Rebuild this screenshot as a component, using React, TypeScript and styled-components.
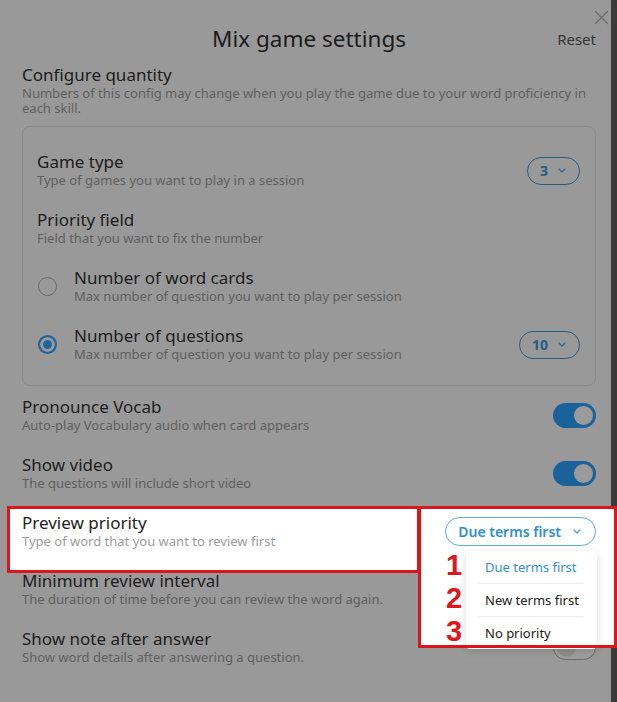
import React from "react";
import styled, { createGlobalStyle } from "styled-components";

const Global = createGlobalStyle`
  html, body { margin: 0; padding: 0; background: #999999; }
  body { font-family: "Noto Sans", "Liberation Sans", sans-serif; }
  * { box-sizing: border-box; }
`;

const Screen = styled.div`
  display: flex;
  width: 617px;
  height: 702px;
  background: #999999;
  overflow: hidden;
`;

const Modal = styled.div`
  position: relative;
  flex: 1;
  display: flex;
  flex-direction: column;
  padding: 26px 15px 0 22px;
`;

const Strip = styled.div`
  width: 6px;
  background: #3a3a3a;
`;

const Close = styled.button`
  position: absolute;
  top: 10px;
  right: 2px;
  width: 15px;
  height: 15px;
  padding: 0;
  border: 0;
  background: transparent;
  display: flex;
`;

const Header = styled.div`
  display: grid;
  grid-template-columns: 1fr auto 1fr;
  align-items: center;
`;

const Heading = styled.h1`
  grid-column: 2;
  margin: 0;
  font-size: 22.5px;
  line-height: 26px;
  font-weight: 400;
  color: #1c1c1c;
`;

const Reset = styled.span`
  justify-self: end;
  font-size: 15px;
  line-height: 20px;
  color: #353535;
`;

const Section = styled.div`
  margin-top: 13px;
`;

const Title = styled.div<{ $lit?: boolean }>`
  font-size: 17px;
  line-height: 20px;
  color: ${(p) => (p.$lit ? "#222222" : "#1c1c1c")};
`;

const Desc = styled.div<{ $lit?: boolean; $wrap?: boolean }>`
  font-size: 13px;
  line-height: ${(p) => (p.$wrap ? "15px" : "17px")};
  margin-top: ${(p) => (p.$wrap ? "1px" : "0")};
  color: ${(p) => (p.$lit ? "#9c9c9c" : "#5f5f5f")};
`;

const Box = styled.div`
  margin-top: 10px;
  border: 1px solid #8b8b8b;
  border-radius: 8px;
  padding: 25px 15px 22px 14px;
  display: flex;
  flex-direction: column;
  gap: 21px;
`;

const List = styled.div`
  margin-top: 11px;
  display: flex;
  flex-direction: column;
  gap: 21px;
`;

const Row = styled.div`
  display: flex;
  align-items: center;
  justify-content: space-between;
`;

const HighlightRow = styled(Row)`
  position: relative;
  z-index: 1;
`;

const Texts = styled.div`
  display: flex;
  flex-direction: column;
`;

const Lead = styled.div`
  display: flex;
  align-items: center;
  gap: 17px;
`;

const Radio = styled.span<{ $on?: boolean }>`
  width: 19px;
  height: 19px;
  border-radius: 50%;
  margin-left: 1px;
  border: ${(p) => (p.$on ? "2px solid #1d659c" : "1.5px solid #6a6a6a")};
  background: ${(p) => (p.$on ? "#1d659c" : "transparent")};
  box-shadow: ${(p) => (p.$on ? "inset 0 0 0 3px #9a9a9a" : "none")};
`;

const Pill = styled.span`
  display: inline-flex;
  align-items: center;
  gap: 10px;
  height: 28px;
  padding: 0 13px 0 12px;
  border: 1px solid #2c5b7c;
  border-radius: 14px;
  font-size: 14px;
  font-weight: 700;
  color: #245d89;
`;

const Toggle = styled.span<{ $on?: boolean }>`
  display: flex;
  align-items: center;
  justify-content: ${(p) => (p.$on ? "flex-end" : "flex-start")};
  width: 43px;
  height: 25px;
  padding: 0 3px;
  border-radius: 13px;
  background: ${(p) => (p.$on ? "#1b629a" : "#9e9e9e")};
  border: ${(p) => (p.$on ? "0" : "1.5px solid #6a6a6a")};
`;

const Knob = styled.span<{ $on?: boolean }>`
  width: 19px;
  height: 19px;
  border-radius: 50%;
  background: ${(p) => (p.$on ? "#9b9b9b" : "#8e8e8e")};
`;

/* White spotlight area of the tutorial annotation (under the content) */
const Spot = styled.div<{ $side: "left" | "right" }>`
  position: absolute;
  z-index: -1;
  top: -7px;
  left: ${(p) => (p.$side === "left" ? "-15px" : "396px")};
  width: ${(p) => (p.$side === "left" ? "413px" : "199px")};
  height: ${(p) => (p.$side === "left" ? "67px" : "142px")};
  background: #ffffff;
`;

/* Red annotation outline drawn over everything */
const Outline = styled(Spot)`
  z-index: 3;
  background: transparent;
  border: 3px solid #dc141c;
  pointer-events: none;
`;

const SelectWrap = styled.div`
  position: relative;
`;

const SelectButton = styled.span`
  display: inline-flex;
  align-items: center;
  gap: 12px;
  height: 29px;
  padding: 0 14px 0 12px;
  border: 1px solid #5aaade;
  border-radius: 15px;
  font-size: 14px;
  font-weight: 600;
  color: #2f8fd2;
`;

const Menu = styled.div`
  position: absolute;
  top: calc(100% + 5px);
  right: -1px;
  width: 131px;
  background: #ffffff;
  border-radius: 4px;
  box-shadow: 0 2px 8px rgba(0, 0, 0, 0.14);
`;

const Item = styled.div<{ $active?: boolean }>`
  position: relative;
  height: 32px;
  display: flex;
  align-items: center;
  padding-left: 19px;
  font-size: 13px;
  color: ${(p) => (p.$active ? "#2f90d6" : "#222222")};
`;

const Divider = styled.div`
  height: 1px;
  margin: 0 14px 0 13px;
  background: #ededed;
`;

const Marker = styled.span`
  position: absolute;
  left: -20px;
  top: 50%;
  transform: translateY(-56%);
  font-family: "Liberation Sans", Arial, sans-serif;
  font-size: 29px;
  font-weight: 700;
  line-height: 1;
  color: #e0161e;
`;

const Chevron = ({ color }: { color: string }) => (
  <svg width="8" height="5" viewBox="0 0 8 5" fill="none">
    <path d="M1 1l3 3 3-3" stroke={color} strokeWidth="1.2" strokeLinecap="round" strokeLinejoin="round" />
  </svg>
);

export default function App() {
  const options = ["Due terms first", "New terms first", "No priority"];
  return (
    <>
      <Global />
      <Screen>
        <Modal>
          <Close aria-label="Close">
            <svg width="15" height="15" viewBox="0 0 15 15">
              <path d="M1.5 1.5l12 12M13.5 1.5l-12 12" stroke="#6e6e6e" strokeWidth="1.4" strokeLinecap="round" />
            </svg>
          </Close>
          <Header>
            <Heading>Mix game settings</Heading>
            <Reset>Reset</Reset>
          </Header>

          <Section>
            <Title>Configure quantity</Title>
            <Desc $wrap>
              Numbers of this config may change when you play the game due to your word proficiency in
              each skill.
            </Desc>
          </Section>

          <Box>
            <Row>
              <Texts>
                <Title>Game type</Title>
                <Desc>Type of games you want to play in a session</Desc>
              </Texts>
              <Pill>
                3 <Chevron color="#2f6790" />
              </Pill>
            </Row>
            <Row>
              <Texts>
                <Title>Priority field</Title>
                <Desc>Field that you want to fix the number</Desc>
              </Texts>
            </Row>
            <Row>
              <Lead>
                <Radio />
                <Texts>
                  <Title>Number of word cards</Title>
                  <Desc>Max number of question you want to play per session</Desc>
                </Texts>
              </Lead>
            </Row>
            <Row>
              <Lead>
                <Radio $on />
                <Texts>
                  <Title>Number of questions</Title>
                  <Desc>Max number of question you want to play per session</Desc>
                </Texts>
              </Lead>
              <Pill>
                10 <Chevron color="#2f6790" />
              </Pill>
            </Row>
          </Box>

          <List>
            <Row>
              <Texts>
                <Title>Pronounce Vocab</Title>
                <Desc>Auto-play Vocabulary audio when card appears</Desc>
              </Texts>
              <Toggle $on>
                <Knob $on />
              </Toggle>
            </Row>
            <Row>
              <Texts>
                <Title>Show video</Title>
                <Desc>The questions will include short video</Desc>
              </Texts>
              <Toggle $on>
                <Knob $on />
              </Toggle>
            </Row>
            <HighlightRow>
              <Spot $side="left" />
              <Spot $side="right" />
              <Outline $side="left" />
              <Outline $side="right" />
              <Texts>
                <Title $lit>Preview priority</Title>
                <Desc $lit>Type of word that you want to review first</Desc>
              </Texts>
              <SelectWrap>
                <SelectButton>
                  Due terms first <Chevron color="#4a9bd6" />
                </SelectButton>
                <Menu>
                  {options.map((o, i) => (
                    <React.Fragment key={o}>
                      {i > 0 && <Divider />}
                      <Item $active={i === 0}>
                        <Marker>{i + 1}</Marker>
                        {o}
                      </Item>
                    </React.Fragment>
                  ))}
                </Menu>
              </SelectWrap>
            </HighlightRow>
            <Row>
              <Texts>
                <Title>Minimum review interval</Title>
                <Desc>The duration of time before you can review the word again.</Desc>
              </Texts>
            </Row>
            <Row>
              <Texts>
                <Title>Show note after answer</Title>
                <Desc>Show word details after answering a question.</Desc>
              </Texts>
              <Toggle>
                <Knob />
              </Toggle>
            </Row>
          </List>
        </Modal>
        <Strip />
      </Screen>
    </>
  );
}
